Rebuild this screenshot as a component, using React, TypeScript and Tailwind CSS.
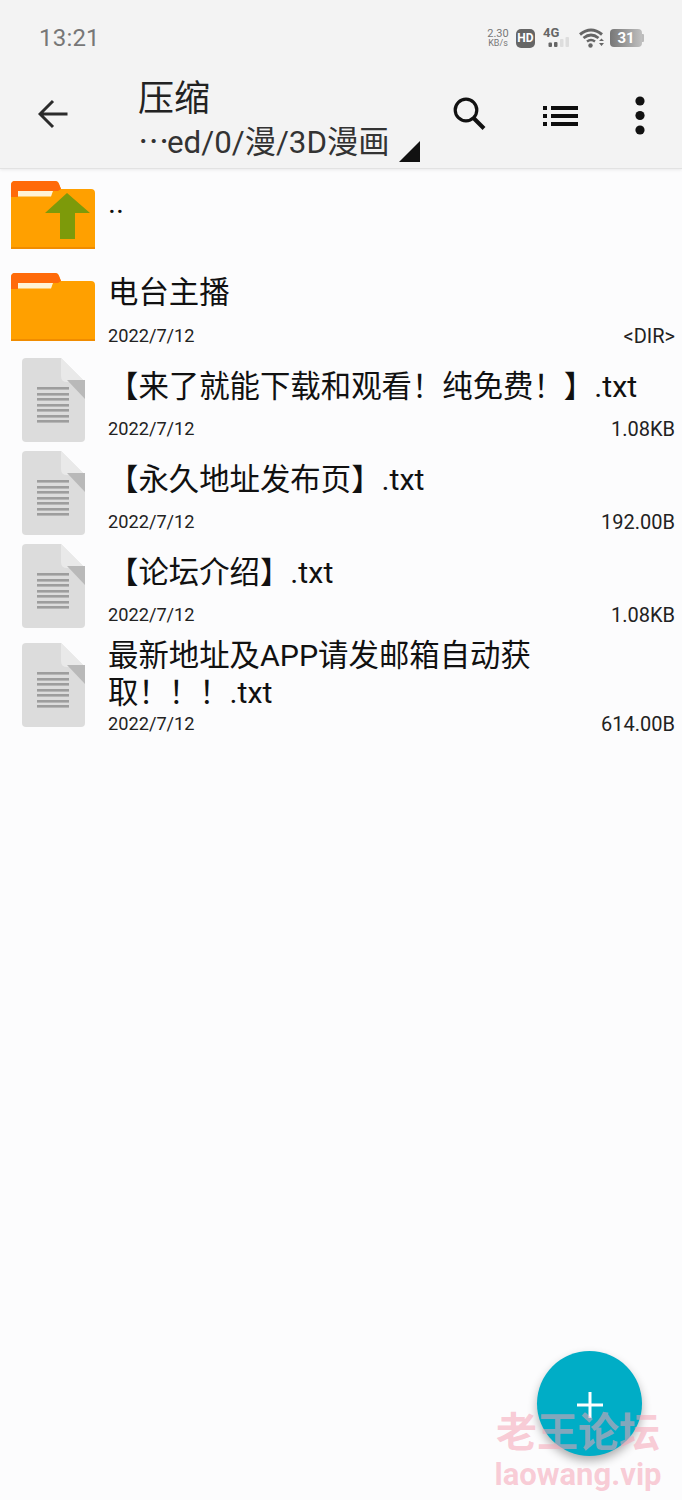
import React from "react";

const font = { fontFamily: 'Roboto, "Noto Sans CJK SC", sans-serif' };

function Folder({ up }: { up?: boolean }) {
  return (
    <svg width="84" height="68" viewBox="0 0 84 68" className="block">
      <path d="M0 5 Q0 0 4 0 H44 Q47 0 48 3 L50 8 H80 Q84 8 84 12 V68 H0 Z" fill="#ffa000" />
      <path d="M0 4 Q0 0 4 0 H44 Q47 0 48 3 L50 8 L47 10 H7 V16 H0 Z" fill="#ff6a0a" />
      <path d="M7 10 H42 L40 15.5 H7 Z" fill="#fff3d6" />
      <rect x="0" y="66" width="84" height="2" fill="#f08c00" />
      {up && <path d="M56 12 L79 32 H64 V58 H49 V32 H34 Z" fill="#7d9a0a" />}
    </svg>
  );
}

function FileIcon() {
  return (
    <svg width="63" height="84" viewBox="0 0 63 84" className="block">
      <path d="M4 0 H39 L63 24 V80 Q63 84 59 84 H4 Q0 84 0 80 V4 Q0 0 4 0 Z" fill="#dcdcdc" />
      <path d="M39 0 L63 24 H45 Q39 24 39 18 Z" fill="#e9e9e9" />
      <path d="M45 22 H63 V41 Z" fill="#b9b9b9" />
      {[29, 35, 40, 46, 51, 57, 62].map((y) => (
        <rect key={y} x="15" y={y} width="32" height="2.6" fill="#9d9d9d" />
      ))}
    </svg>
  );
}

function Row({ icon, name, size, h, iconTop, nameClass, children }: { icon: React.ReactNode; name?: string; size?: string; h: string; iconTop: string; nameClass?: string; children?: React.ReactNode }) {
  return (
    <div className={`flex ${h}`}>
      <div className={`w-[108px] shrink-0 ${iconTop}`}>{icon}</div>
      <div className="flex-1 flex flex-col justify-between pr-[7px] pb-[11px] min-w-0">
        <div className={`text-[30.4px] leading-[37px] text-[#111111] ${nameClass ?? ""}`}>{children ?? name}</div>
        {size && (
          <div className="flex justify-between items-center h-[22px] text-[#222222]">
            <span className="text-[18.2px] leading-[22px]">2022/7/12</span>
            <span className="text-[20px] leading-[22px]">{size}</span>
          </div>
        )}
      </div>
    </div>
  );
}

export default function App() {
  return (
    <div style={font} className="relative w-[682px] h-[1500px] bg-[#fcfcfd] overflow-hidden">
      <header className="h-[169px] bg-[#f3f3f3] border-b border-[#e2e2e2] shadow-[0_1px_3px_rgba(0,0,0,0.08)] flex flex-col">
        <div className="h-[72px] flex items-center justify-between pl-[39px] pr-[38px] pt-[4px]">
          <span className="text-[24px] text-[#777777] tracking-[0.2px]">13:21</span>
          <div className="flex items-center">
            <div className="flex flex-col items-center text-[#777777] w-[24px] mr-[6px]">
              <span className="text-[11px] leading-[11px]">2.30</span>
              <span className="text-[9px] leading-[9px]">KB/s</span>
            </div>
            <span className="w-[19px] h-[19px] rounded-[5px] bg-[#666666] text-white text-[12px] leading-[19px] font-bold text-center">HD</span>
            <div className="relative w-[29px] h-[20px] ml-[8px] mr-[7px]">
              <span className="absolute left-0 top-[-2px] text-[#666666] text-[13px] leading-[13px] font-bold">4G</span>
              <svg width="29" height="20" viewBox="0 0 29 20" className="absolute left-0 top-0">
                <rect x="5.5" y="14.5" width="3.5" height="4.5" rx="1" fill="#666" />
                <rect x="11" y="14" width="3.5" height="5" rx="1" fill="#666" />
                <rect x="17" y="11" width="3.5" height="8" rx="1" fill="#ddd" />
                <rect x="22.5" y="9" width="3.5" height="10" rx="1" fill="#ddd" />
              </svg>
            </div>
            <svg width="25" height="20" viewBox="0 0 25 20" className="mr-[6px]">
              <path d="M1 6.5 Q12 -2.5 23 6.5" stroke="#666" strokeWidth="3" fill="none" />
              <path d="M4.5 10 Q12 4 19.5 10" stroke="#666" strokeWidth="2.8" fill="none" />
              <path d="M8 13.5 Q12 10.5 16 13.5" stroke="#666" strokeWidth="2.6" fill="none" />
              <circle cx="11.5" cy="17.5" r="2.2" fill="#666" />
              <path d="M20 13 L22.5 10.5 L25 13 Z M20 15 H25 L22.5 18 Z" fill="#666" />
            </svg>
            <div className="relative w-[32px] h-[18px] rounded-[4px] bg-linear-to-r from-[#777777] to-[#c0c0c0] overflow-hidden">
              <span className="absolute inset-0 text-center text-white text-[15px] leading-[18px] font-bold">31</span>
            </div>
            <div className="w-[2px] h-[8px] bg-[#bbbbbb] rounded-r-[1px]" />
          </div>
        </div>
        <div className="flex-1 flex items-start">
          <div className="w-[138px] shrink-0 pl-[38px] pt-[27px]">
            <svg width="31" height="30" viewBox="0 0 31 30">
              <path d="M29.5 15 H2.5 M15 2 L2 15 L15 28" stroke="#2b2b2b" strokeWidth="3" fill="none" />
            </svg>
          </div>
          <div className="flex-1 min-w-0">
            <div className="text-[36px] leading-[44px] text-[#222222] pt-[5px]">压缩</div>
            <div className="flex items-end text-[#333333] whitespace-nowrap">
              <span className="text-[31.3px] leading-[38px]">
                <span className="inline-block w-[29px]" style={{ fontFamily: '"Noto Sans CJK SC", sans-serif' }}>⋯</span>ed/0/漫/3D漫画
              </span>
              <svg width="21" height="21" viewBox="0 0 21 21" className="ml-[9px] mb-[0px]">
                <path d="M21 0 V21 H0 Z" fill="#111" />
              </svg>
            </div>
          </div>
          <div className="flex items-start shrink-0 pt-[25px]">
            <svg width="34" height="34" viewBox="0 0 34 34" className="mr-[57px]">
              <circle cx="14" cy="13" r="10.8" stroke="#111" strokeWidth="3.2" fill="none" />
              <path d="M21.5 21 L32 31.5" stroke="#111" strokeWidth="4" />
            </svg>
            <svg width="35" height="20" viewBox="0 0 35 20" className="mr-[57px] mt-[9px]">
              <path d="M0 0 H4 V4 H0 Z M8 0 H35 V4 H8 Z M0 8 H4 V12 H0 Z M8 8 H35 V12 H8 Z M0 16 H4 V20 H0 Z M8 16 H35 V20 H8 Z" fill="#0d0d0d" />
            </svg>
            <svg width="10" height="39" viewBox="0 0 10 39" className="mr-[37px] mt-[-1px]">
              <circle cx="5" cy="5" r="4.6" fill="#111" />
              <circle cx="5" cy="19.5" r="4.6" fill="#111" />
              <circle cx="5" cy="34" r="4.6" fill="#111" />
            </svg>
          </div>
        </div>
      </header>

      <main className="flex flex-col pt-[12px]">
        <Row h="h-[92px]" iconTop="pl-[11px]" icon={<Folder up />} nameClass="pt-[3px]" name=".." />
        <Row h="h-[85px]" iconTop="pl-[11px]" icon={<Folder />} name="电台主播" size="<DIR>" nameClass="pt-[1px]" />
        <Row h="h-[93px]" iconTop="pl-[22px]" icon={<FileIcon />} name="【来了就能下载和观看！纯免费！】.txt" size="1.08KB" nameClass="pt-[10px]" />
        <Row h="h-[93px]" iconTop="pl-[22px]" icon={<FileIcon />} name="【永久地址发布页】.txt" size="192.00B" nameClass="pt-[10px]" />
        <Row h="h-[93px]" iconTop="pl-[22px]" icon={<FileIcon />} name="【论坛介绍】.txt" size="1.08KB" nameClass="pt-[10px]" />
        <Row h="h-[109px]" iconTop="pl-[22px] pt-[6px]" icon={<FileIcon />} size="614.00B" nameClass="pr-[130px]">
          最新地址及APP请发邮箱自动获取！！！.txt
        </Row>
      </main>

      <button className="absolute left-[537px] top-[1351px] w-[105px] h-[105px] rounded-full bg-[#00adc6] shadow-[0_5px_10px_rgba(0,0,0,0.3)] flex items-center justify-center">
        <svg width="28" height="28" viewBox="0 0 28 28" className="mt-[3px]">
          <path d="M14 1 V27 M1 14 H27" stroke="#fff" strokeWidth="3" />
        </svg>
      </button>

      <div className="absolute left-[493px] top-[1408px] w-[170px] flex flex-col items-center font-bold text-[#f5a3b5]/55">
        <span className="text-[41px] leading-[50px] whitespace-nowrap">老王论坛</span>
        <span className="text-[31px] leading-[34px] whitespace-nowrap" style={{ fontFamily: 'Roboto, sans-serif' }}>laowang.vip</span>
      </div>
    </div>
  );
}
